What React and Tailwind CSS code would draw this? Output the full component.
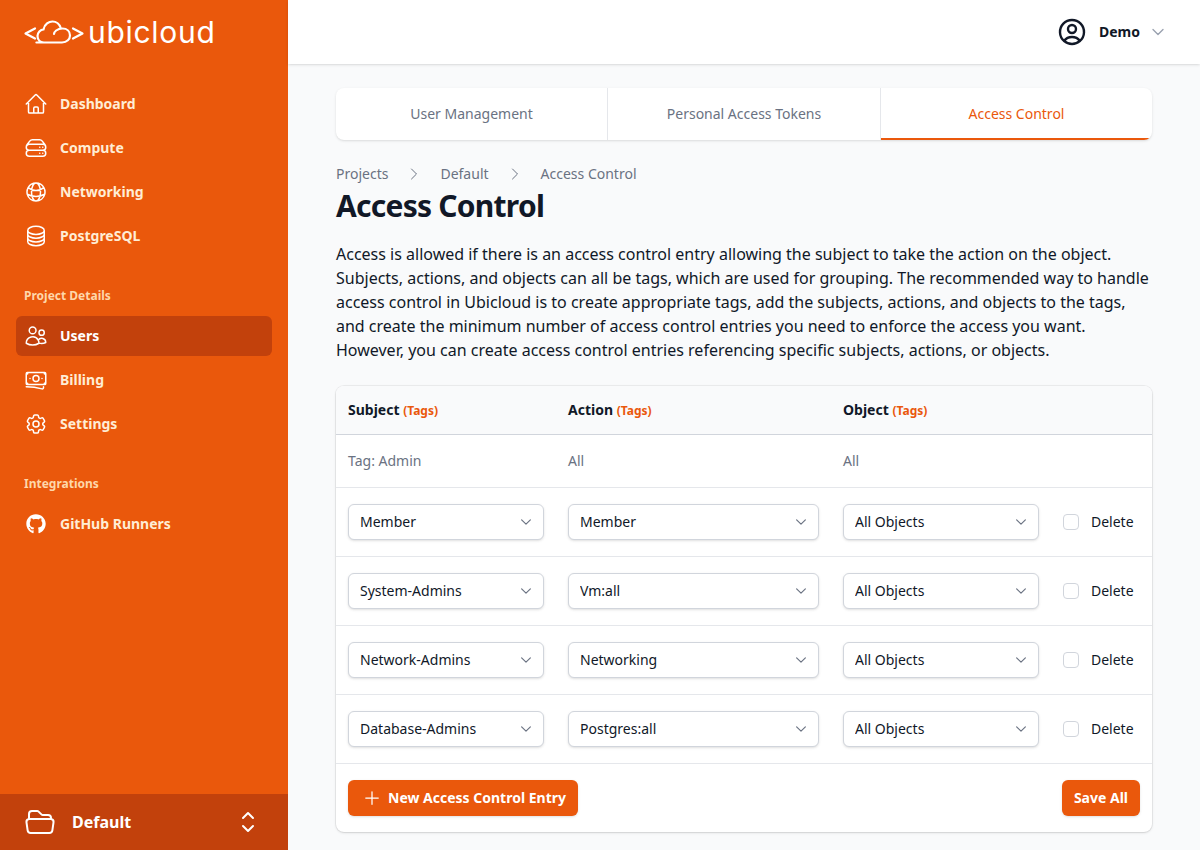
import React from "react";
import {
  HiOutlineHome, HiOutlineServerStack, HiOutlineGlobeAlt, HiOutlineCircleStack, HiOutlineUsers,
  HiOutlineBanknotes, HiOutlineCog6Tooth, HiOutlineFolderOpen, HiOutlineChevronUpDown,
  HiOutlineUserCircle, HiOutlineChevronDown, HiOutlineChevronRight, HiOutlinePlus,
} from "react-icons/hi2";
import { FaGithub } from "react-icons/fa";

function Logo() {
  return (
    <div className="flex items-center h-16 pl-6">
      <svg width="60" height="28" viewBox="0 0 60 28" fill="none" stroke="white" strokeWidth="2.2" strokeLinecap="round" strokeLinejoin="round" className="shrink-0">
        <path d="M11 10.5 L1.5 15.5 L11 20.5" />
        <path d="M49 10.5 L58.5 15.5 L49 20.5" />
        <path d="M14 24.5 C10 24.5 14 24.5 21 24.5 L38 24.5 C43 24.5 46 21 46 17.5 C46 13.5 43 10.5 38.5 10.5 C33 10.5 30 14 30 16 M24.5 24.5 L20 24.5 C16 24.5 13.5 21.5 13.5 18 C13.5 14.5 16.5 11.5 19.5 11.5 C20.5 6 25 3.5 28.5 3.5 C32.5 3.5 35.5 6.5 36.5 9.5" />
      </svg>
      <span className="ml-[4px] text-[30px] leading-none font-normal tracking-[0.7px] text-white font-['Inter',sans-serif]">ubicloud</span>
    </div>
  );
}

function NavItem({ icon: Icon, label, active, iconClass = "w-6 h-6" }) {
  return (
    <a className={`flex items-center h-10 px-2 rounded-md text-sm font-bold leading-6 ${active ? "bg-[#c2410c] text-white" : "text-[#ffedd5]"}`}>
      <span className="w-6 h-6 mr-3 shrink-0 flex items-center justify-center">
        <Icon className={`${iconClass} text-white`} />
      </span>
      {label}
    </a>
  );
}

function SectionTitle({ children, className }) {
  return <div className={`px-2 text-xs font-bold leading-6 text-[#fed7aa] ${className}`}>{children}</div>;
}

function Sidebar() {
  return (
    <aside className="w-72 shrink-0 h-full flex flex-col bg-[#ea580c]">
      <Logo />
      <nav className="flex-1 px-4 pt-5">
        <div className="flex flex-col gap-1">
          <NavItem icon={HiOutlineHome} label="Dashboard" />
          <NavItem icon={HiOutlineServerStack} label="Compute" />
          <NavItem icon={HiOutlineGlobeAlt} label="Networking" />
          <NavItem icon={HiOutlineCircleStack} label="PostgreSQL" />
        </div>
        <SectionTitle className="mt-7 mb-2">Project Details</SectionTitle>
        <div className="flex flex-col gap-1">
          <NavItem icon={HiOutlineUsers} label="Users" active />
          <NavItem icon={HiOutlineBanknotes} label="Billing" />
          <NavItem icon={HiOutlineCog6Tooth} label="Settings" />
        </div>
        <SectionTitle className="mt-7 mb-2">Integrations</SectionTitle>
        <NavItem icon={FaGithub} label="GitHub Runners" iconClass="w-5 h-5" />
      </nav>
      <div className="h-14 flex items-center bg-[#c2410c] pl-6 pr-6 text-white">
        <HiOutlineFolderOpen className="w-8 h-8 shrink-0" />
        <span className="ml-4 flex-1 text-base font-bold">Default</span>
        <HiOutlineChevronUpDown className="w-8 h-8" />
      </div>
    </aside>
  );
}

function Header() {
  return (
    <header className="h-16 shrink-0 bg-white shadow-sm flex items-center justify-end pr-[34px]">
      <HiOutlineUserCircle className="w-8 h-8 text-[#111827]" strokeWidth={1.8} />
      <span className="ml-[11px] text-sm font-bold text-[#111827]">Demo</span>
      <HiOutlineChevronDown className="ml-[10px] w-4 h-4 text-gray-400" strokeWidth={2} />
    </header>
  );
}

function Tabs() {
  const tabs = ["User Management", "Personal Access Tokens", "Access Control"];
  return (
    <div className="grid grid-cols-[272px_273px_1fr] h-[52px] bg-white rounded-lg shadow-sm overflow-hidden divide-x divide-gray-200">
      {tabs.map((t, i) => (
        <div key={t} className={`flex items-center justify-center text-sm ${i === 2 ? "text-[#ea580c] border-y-2 border-t-transparent border-b-[#ea580c]" : "text-gray-500"}`}>{t}</div>
      ))}
    </div>
  );
}

function Breadcrumb() {
  const items = ["Projects", "Default", "Access Control"];
  return (
    <div className="mt-6 flex items-center h-5 text-sm text-gray-500">
      {items.map((t, i) => (
        <React.Fragment key={t}>
          {i > 0 && <HiOutlineChevronRight className="w-4 h-4 mx-[18px] text-gray-500" />}
          <span>{t}</span>
        </React.Fragment>
      ))}
    </div>
  );
}

const rowGrid = "grid grid-cols-[196px_251px_196px_1fr] gap-x-6 items-center px-3";

function Select({ value }) {
  return (
    <div className="relative h-9">
      <select defaultValue={value} className="appearance-none w-full h-9 rounded-md bg-white border border-gray-300 shadow-sm pl-[11px] pr-8 text-sm text-gray-900 outline-none">
        <option>{value}</option>
      </select>
      <HiOutlineChevronDown className="absolute right-[11px] top-[11px] w-[14px] h-[14px] text-gray-500 pointer-events-none" strokeWidth={2} />
    </div>
  );
}

function Row({ s, a }) {
  return (
    <div className={`${rowGrid} h-[69px] border-b border-gray-200`}>
      <Select value={s} />
      <Select value={a} />
      <Select value="All Objects" />
      <label className="flex items-center gap-3 text-sm text-gray-900">
        <input type="checkbox" className="appearance-none w-4 h-4 rounded border border-gray-300 bg-white" />
        Delete
      </label>
    </div>
  );
}

function Head({ label }) {
  return (
    <div className="text-sm font-bold text-gray-900">
      {label} <span className="text-xs font-bold text-[#ea580c]">(Tags)</span>
    </div>
  );
}

function Table() {
  const rows = [
    ["Member", "Member"],
    ["System-Admins", "Vm:all"],
    ["Network-Admins", "Networking"],
    ["Database-Admins", "Postgres:all"],
  ];
  return (
    <div className="mt-6 bg-white rounded-lg shadow ring-1 ring-black/5 overflow-hidden">
      <div className={`${rowGrid} h-[49px] bg-gray-50 border-b border-gray-300`}>
        <Head label="Subject" />
        <Head label="Action" />
        <Head label="Object" />
      </div>
      <div className={`${rowGrid} h-[53px] border-b border-gray-200 text-sm text-gray-500`}>
        <div>Tag: Admin</div>
        <div>All</div>
        <div>All</div>
      </div>
      {rows.map(([s, a]) => <Row key={s} s={s} a={a} />)}
      <div className="flex items-center justify-between h-[68px] px-3">
        <button className="flex items-center h-9 rounded-md bg-[#ea580c] pl-[14px] pr-3 text-sm font-bold text-white shadow-sm">
          <HiOutlinePlus className="w-5 h-5 mr-[6px]" />
          New Access Control Entry
        </button>
        <button className="h-9 rounded-md bg-[#ea580c] px-3 text-sm font-bold text-white shadow-sm">Save All</button>
      </div>
    </div>
  );
}

export default function App() {
  return (
    <div className="flex h-screen overflow-hidden bg-gray-50 font-['Noto_Sans',sans-serif]">
      <Sidebar />
      <div className="flex-1 flex flex-col min-w-0">
        <Header />
        <main className="px-12 pt-6">
          <Tabs />
          <Breadcrumb />
          <h1 className="mt-[4px] text-3xl leading-9 font-bold tracking-tight text-[#111827]">Access Control</h1>
          <p className="mt-[18px] text-base leading-6 text-gray-900">
            Access is allowed if there is an access control entry allowing the subject to take the action on the object. Subjects, actions, and objects can all be tags, which are used for grouping. The recommended way to handle access control in Ubicloud is to create appropriate tags, add the subjects, actions, and objects to the tags, and create the minimum number of access control entries you need to enforce the access you want. However, you can create access control entries referencing specific subjects, actions, or objects.
          </p>
          <Table />
        </main>
      </div>
    </div>
  );
}
